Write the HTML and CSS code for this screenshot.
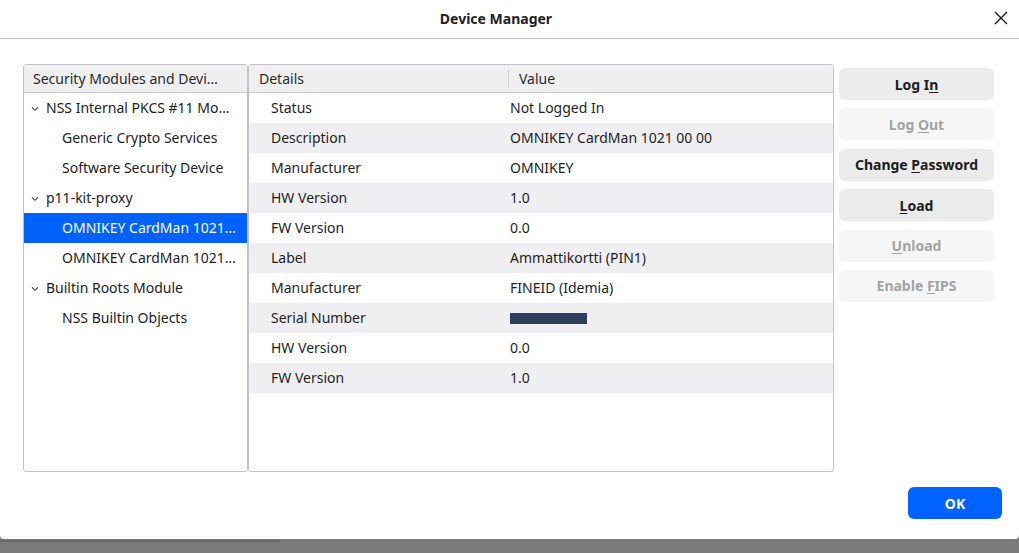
FILE: index.html
```html
<!DOCTYPE html>
<html>
<head>
<meta charset="utf-8">
<link rel="stylesheet" href="styles.css">
</head>
<body>
<div class="dialog">
  <div class="titlebar">
    <div class="title">Device Manager</div>
    <svg class="close" width="14" height="14" viewBox="0 0 14 14"><path d="M1 1L13 13M13 1L1 13" stroke="#1a1a1a" stroke-width="1.4" fill="none"/></svg>
  </div>
  <div class="content">
    <div class="panel tree">
      <div class="thead"><span class="hcell">Security Modules and Devi…</span></div>
      <div class="trow l1"><svg class="chev" width="8" height="6" viewBox="0 0 8 6"><path d="M1 1.3L4 4.3L7 1.3" stroke="#3a3a3a" stroke-width="1.1" fill="none"/></svg><span>NSS Internal PKCS #11 Mo…</span></div>
      <div class="trow l2">Generic Crypto Services</div>
      <div class="trow l2">Software Security Device</div>
      <div class="trow l1"><svg class="chev" width="8" height="6" viewBox="0 0 8 6"><path d="M1 1.3L4 4.3L7 1.3" stroke="#3a3a3a" stroke-width="1.1" fill="none"/></svg><span>p11-kit-proxy</span></div>
      <div class="trow l2 sel">OMNIKEY CardMan 1021…</div>
      <div class="trow l2">OMNIKEY CardMan 1021…</div>
      <div class="trow l1"><svg class="chev" width="8" height="6" viewBox="0 0 8 6"><path d="M1 1.3L4 4.3L7 1.3" stroke="#3a3a3a" stroke-width="1.1" fill="none"/></svg><span>Builtin Roots Module</span></div>
      <div class="trow l2">NSS Builtin Objects</div>
    </div>
    <div class="panel details">
      <div class="thead dhead"><span class="c1">Details</span><span class="c2">Value</span></div>
      <div class="drow"><span class="k">Status</span><span class="v">Not Logged In</span></div>
      <div class="drow alt"><span class="k">Description</span><span class="v">OMNIKEY CardMan 1021 00 00</span></div>
      <div class="drow"><span class="k">Manufacturer</span><span class="v">OMNIKEY</span></div>
      <div class="drow alt"><span class="k">HW Version</span><span class="v">1.0</span></div>
      <div class="drow"><span class="k">FW Version</span><span class="v">0.0</span></div>
      <div class="drow alt"><span class="k">Label</span><span class="v">Ammattikortti (PIN1)</span></div>
      <div class="drow"><span class="k">Manufacturer</span><span class="v">FINEID (Idemia)</span></div>
      <div class="drow alt"><span class="k">Serial Number</span><span class="v"><span class="redact"></span></span></div>
      <div class="drow"><span class="k">HW Version</span><span class="v">0.0</span></div>
      <div class="drow alt"><span class="k">FW Version</span><span class="v">1.0</span></div>
    </div>
    <div class="buttons">
      <div class="btn"><span>Log I<u>n</u></span></div>
      <div class="btn dis"><span>Log <u>O</u>ut</span></div>
      <div class="btn"><span>Change <u>P</u>assword</span></div>
      <div class="btn"><span><u>L</u>oad</span></div>
      <div class="btn dis"><span><u>U</u>nload</span></div>
      <div class="btn dis"><span>Enable <u>F</u>IPS</span></div>
    </div>
  </div>
  <div class="footer">
    <div class="ok">OK</div>
  </div>
</div>
<div class="below"></div>
</body>
</html>
```
FILE: styles.css
```css
html, body {
  margin: 0;
  padding: 0;
}
body {
  width: 1019px;
  height: 553px;
  background: #7b7b7b;
  font-family: "Noto Sans", "DejaVu Sans", sans-serif;
  font-size: 14px;
  color: #1e1e1e;
  overflow: hidden;
}
.dialog {
  width: 1019px;
  height: 539px;
  background: #fff;
  border-radius: 0 0 4px 4px;
  display: flex;
  flex-direction: column;
}
.titlebar {
  height: 38px;
  border-bottom: 1px solid #c2c1c8;
  display: flex;
  align-items: center;
  justify-content: center;
  position: relative;
  padding-right: 27px;
}
.title {
  font-weight: bold;
  font-size: 14px;
  color: #222;
  margin-top: -1px;
}
.close {
  position: absolute;
  right: 11px;
  top: 11px;
}
.content {
  display: flex;
  padding: 25px 0 0 23px;
  height: 408px;
}
.panel {
  border: 1px solid #c3c2c9;
  border-radius: 3px;
  height: 406px;
  overflow: hidden;
  background: #fff;
}
.tree {
  width: 223px;
}
.details {
  width: 584px;
}
.thead {
  height: 27px;
  background: #efeff0;
  border-bottom: 1px solid #c9c9cd;
  display: flex;
  align-items: center;
  color: #2a2a2a;
}
.hcell {
  padding-left: 9px;
  white-space: nowrap;
}
.trow {
  height: 29px;
  padding-bottom: 1px;
  display: flex;
  align-items: center;
  white-space: nowrap;
  color: #222;
}
.l1 {
  padding-left: 7px;
}
.l2 {
  padding-left: 38px;
}
.chev {
  margin: 2px 7px 0 0;
  flex: none;
}
.sel {
  background: #0062fa;
  color: #fff;
}
.dhead .c1 {
  width: 259px;
  padding-left: 10px;
  box-sizing: border-box;
}
.dhead .c2 {
  border-left: 1px solid #cfcfd3;
  padding-left: 10px;
  height: 18px;
  line-height: 18px;
}
.drow {
  height: 29px;
  padding-bottom: 1px;
  display: flex;
  align-items: center;
  white-space: nowrap;
}
.drow.alt {
  background: #efeff1;
}
.drow .k {
  width: 239px;
  padding-left: 22px;
}
.drow .v {
  display: flex;
  align-items: center;
}
.redact {
  display: inline-block;
  width: 77px;
  height: 11px;
  background: #2d3d5a;
  margin-top: 1px;
}
.buttons {
  display: flex;
  flex-direction: column;
  gap: 8.4px;
  margin-left: 5px;
  padding-top: 4px;
  width: 155px;
}
.btn {
  height: 32px;
  border-radius: 6px;
  background: #ebebeb;
  display: flex;
  align-items: center;
  justify-content: center;
  font-weight: bold;
  color: #1c1c1c;
}
.btn span {
  white-space: pre;
}
.btn.dis {
  background: #f6f6f6;
  color: #a3a3a3;
}
.btn u {
  text-underline-offset: 2px;
}
.footer {
  display: flex;
  justify-content: flex-end;
  padding: 15px 17px 0 0;
}
.ok {
  width: 94px;
  height: 32px;
  background: #0062ff;
  border-radius: 6px;
  color: #fff;
  font-weight: bold;
  display: flex;
  align-items: center;
  justify-content: center;
}
.below {
  width: 280px;
  height: 2px;
  background: #555;
  margin-top: 1px;
  opacity: 0.5;
}
```
